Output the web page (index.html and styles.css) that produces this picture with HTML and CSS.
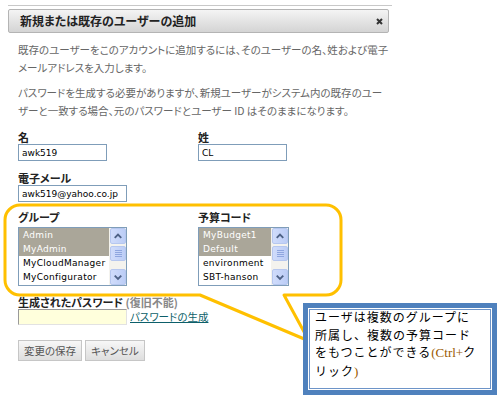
FILE: index.html
```html
<!DOCTYPE html>
<html lang="ja">
<head>
<meta charset="utf-8">
<link rel="stylesheet" href="styles.css">
</head>
<body>
<div class="page">
  <div class="dialog">
    <div class="topline"></div>
    <div class="header">
      <span class="title">新規または既存のユーザーの追加</span>
      <svg class="close" width="7" height="7" viewBox="0 0 7 7"><path d="M1 1L6 6M6 1L1 6" stroke="#333" stroke-width="2"/></svg>
    </div>
    <div class="body">
      <p class="desc">既存のユーザーをこのアカウントに追加するには、そのユーザーの名、姓および電子<br>メールアドレスを入力します。</p>
      <p class="desc">パスワードを生成する必要がありますが、新規ユーザーがシステム内の既存のユー<br>ザーと一致する場合、元のパスワードとユーザー ID はそのままになります。</p>

      <div class="grid2 names">
        <div class="field">
          <label class="label">名</label>
          <input class="input w89" type="text" value="awk519">
        </div>
        <div class="field">
          <label class="label">姓</label>
          <input class="input w89" type="text" value="CL">
        </div>
      </div>

      <div class="field email">
        <label class="label">電子メール</label>
        <input class="input w109" type="text" value="awk519@yahoo.co.jp">
      </div>

      <div class="grid2 lists">
        <div class="field">
          <label class="label">グループ</label>
          <div class="listbox w109">
            <div class="items">
              <div class="item sel">Admin</div>
              <div class="item sel">MyAdmin</div>
              <div class="item">MyCloudManager</div>
              <div class="item">MyConfigurator</div>
            </div>
            <div class="scroll">
              <div class="sbtn"><svg width="15" height="14" viewBox="0 0 15 14"><path d="M4 9L7.5 5.5L11 9" fill="none" stroke="#4d6185" stroke-width="2"/></svg></div>
              <div class="thumb"><span></span><span></span><span></span><span></span></div>
              <div class="track"></div>
              <div class="sbtn"><svg width="15" height="14" viewBox="0 0 15 14"><path d="M4 5.5L7.5 9L11 5.5" fill="none" stroke="#4d6185" stroke-width="2"/></svg></div>
            </div>
          </div>
        </div>
        <div class="field">
          <label class="label">予算コード</label>
          <div class="listbox w91">
            <div class="items">
              <div class="item sel">MyBudget1</div>
              <div class="item sel">Default</div>
              <div class="item">environment</div>
              <div class="item">SBT-hanson</div>
            </div>
            <div class="scroll">
              <div class="sbtn"><svg width="15" height="14" viewBox="0 0 15 14"><path d="M4 9L7.5 5.5L11 9" fill="none" stroke="#4d6185" stroke-width="2"/></svg></div>
              <div class="thumb"><span></span><span></span><span></span><span></span></div>
              <div class="track"></div>
              <div class="sbtn"><svg width="15" height="14" viewBox="0 0 15 14"><path d="M4 5.5L7.5 9L11 5.5" fill="none" stroke="#4d6185" stroke-width="2"/></svg></div>
            </div>
          </div>
        </div>
      </div>

      <div class="field pw">
        <label class="label">生成されたパスワード <span class="muted">(復旧不能)</span></label>
        <div class="pwrow">
          <input class="pwinput" type="text" value="">
          <a class="link" href="#">パスワードの生成</a>
        </div>
      </div>

      <div class="buttons">
        <button class="btn b1">変更の保存</button>
        <button class="btn b2">キャンセル</button>
      </div>
    </div>
  </div>

  <svg class="callout" width="502" height="407" viewBox="0 0 502 407">
    <path d="M20 205H326A15 15 0 0 1 341 220V280A15 15 0 0 1 326 295H284L309 341L200 295H20A15 15 0 0 1 5 280V220A15 15 0 0 1 20 205Z" fill="none" stroke="#ffc000" stroke-width="3" stroke-linejoin="round"/>
  </svg>

  <div class="note">
    <div class="note-inner">
      <p class="note-text">ユーザは複数のグループに<br>所属し、複数の予算コード<br>をもつことができる<span class="ctrl">(Ctrl+</span>ク<br>リック<span class="ctrl">)</span></p>
    </div>
  </div>
</div>
</body>
</html>
```

FILE: styles.css
```css
body {
  margin: 0;
  background: #fff;
  font-family: "Noto Sans CJK JP", sans-serif;
}

.page {
  position: relative;
  width: 502px;
  height: 407px;
  overflow: hidden;
}

.dialog {
  margin-left: 8px;
  padding-top: 5px;
  width: 384px;
}

.topline {
  height: 1px;
  background: #c8c8c8;
}

.header {
  margin-top: 3px;
  width: 381px;
  height: 24px;
  box-sizing: border-box;
  border: 1px solid #b4b4b4;
  border-radius: 2px;
  background: linear-gradient(#f4f4f4, #d4d4d4);
  display: flex;
  align-items: center;
  justify-content: space-between;
  padding: 0 5px 0 11px;
}

.title {
  font-size: 12px;
  font-weight: bold;
  color: #222;
  font-feature-settings: "palt";
  line-height: 14px;
}

.close {
  display: block;
}

.body {
  padding-left: 10px;
}

.desc {
  margin: 8px 0 0;
  font-size: 10.5px;
  line-height: 18px;
  color: #666;
  font-feature-settings: "palt";
  white-space: nowrap;
}

.desc + .desc {
  margin-top: 7px;
}

.grid2 {
  display: grid;
  grid-template-columns: 180px auto;
}

.field {
  display: flex;
  flex-direction: column;
  align-items: flex-start;
}

.label {
  display: block;
  font-size: 11px;
  font-weight: bold;
  line-height: 14px;
  color: #222;
  font-feature-settings: "palt";
  white-space: nowrap;
}

.muted {
  color: #888;
}

.names {
  margin-top: 10px;
}

.email {
  margin-top: 10px;
}

.lists {
  margin-top: 8px;
}

.pw {
  margin-top: 9px;
}

.input {
  box-sizing: border-box;
  height: 17px;
  margin: 0;
  border: 1px solid #7f9db9;
  font-family: "DejaVu Sans", sans-serif;
  font-size: 9px;
  padding: 0 3px;
  color: #000;
  background: #fff;
  outline: none;
}

.w89 { width: 89px; }
.w109 { width: 109px; }
.w91 { width: 91px; }

.listbox {
  margin-top: 3px;
  box-sizing: border-box;
  height: 59px;
  border: 1px solid #7f9db9;
  display: flex;
  background: #fff;
}

.items {
  flex: 1;
  min-width: 0;
  padding-top: 0;
}

.item {
  height: 14px;
  line-height: 14px;
  padding-left: 4px;
  font-family: "DejaVu Sans", sans-serif;
  font-size: 9px;
  letter-spacing: 0.3px;
  color: #000;
  white-space: nowrap;
}

.item.sel {
  background: #aaa699;
  color: #fff;
}

.scroll {
  width: 17px;
  display: flex;
  flex-direction: column;
  background: #f4f3ee;
  padding-left: 1px;
  box-sizing: border-box;
}

.sbtn {
  height: 16px;
  box-sizing: border-box;
  border: 1px solid #b6c7ef;
  border-radius: 2px;
  background: linear-gradient(90deg, #d0dcfb, #bccdf6);
  display: flex;
  align-items: center;
  justify-content: center;
}

.sbtn svg {
  display: block;
}

.thumb {
  margin-top: 2px;
  height: 15px;
  box-sizing: border-box;
  border: 1px solid #b6c7ef;
  border-radius: 2px;
  background: linear-gradient(90deg, #d0dcfb, #bccdf6);
  display: flex;
  flex-direction: column;
  align-items: center;
  justify-content: center;
  gap: 1px;
}

.thumb span {
  display: block;
  width: 7px;
  height: 1px;
  background: #8fa6df;
}

.track {
  flex: 1;
}

.pwrow {
  display: flex;
  align-items: center;
  gap: 3px;
}

.pwinput {
  box-sizing: border-box;
  width: 109px;
  height: 16px;
  margin: 0;
  padding: 0;
  border-style: solid;
  border-width: 1px;
  border-color: #9a9a9a #e2e2e2 #e2e2e2 #9a9a9a;
  background: #ffffdc;
  outline: none;
}

.link {
  font-size: 10.5px;
  line-height: 14px;
  color: #0d5f6a;
  text-decoration: underline;
  font-feature-settings: "palt";
}

.buttons {
  margin-top: 15px;
  display: flex;
  gap: 3px;
}

.btn {
  height: 21px;
  margin: 0;
  padding: 0;
  box-sizing: border-box;
  border: 1px solid #c6c6c6;
  background: linear-gradient(#f7f7f7, #dedede);
  color: #555;
  font-family: "Noto Sans CJK JP", sans-serif;
  font-size: 10.5px;
  font-feature-settings: "palt";
}

.b1 { width: 64px; }
.b2 { width: 60px; }

.callout {
  position: absolute;
  left: 0;
  top: 0;
  pointer-events: none;
}

.note {
  position: absolute;
  left: 303px;
  top: 303px;
  width: 194px;
  height: 92px;
  box-sizing: border-box;
  background: #4f81bd;
  padding: 5px;
}

.note-inner {
  height: 100%;
  box-sizing: border-box;
  background: #fff;
  box-shadow: inset 0 0 0 1px #fff, inset 0 0 0 2px #6d94c8;
  padding: 0 0 0 7px;
}

.note-text {
  margin: 0;
  font-size: 12px;
  line-height: 17.5px;
  letter-spacing: 1px;
  color: #000;
  white-space: nowrap;
}

.ctrl {
  font-family: "Liberation Serif", serif;
  font-size: 13px;
  letter-spacing: 0;
  color: #9a5a00;
}
```
